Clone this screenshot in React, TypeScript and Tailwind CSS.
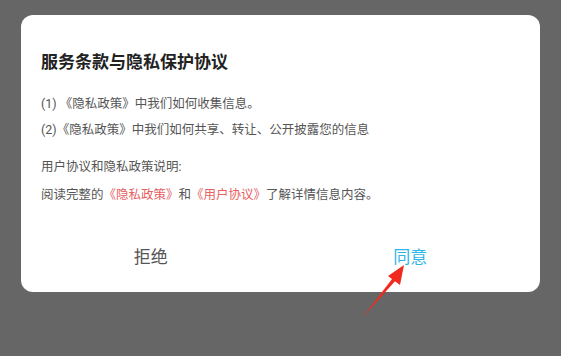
const App = () => {
  return (
    <div
      className="relative h-[356px] w-[561px] overflow-hidden bg-[#666666] pt-[15px]"
      style={{ fontFamily: 'Roboto, "Noto Sans CJK SC", sans-serif' }}
    >
      <div className="mx-[21px] h-[277px] rounded-[12px] bg-white">
        <div className="pl-[20px] pr-[20px] pt-[35px]">
          <h1 className="text-[17px] font-bold leading-[24px] text-[#222222]">
            服务条款与隐私保护协议
          </h1>
          <div className="mt-[17px] text-[12.5px] leading-[26px] text-[#555555]">
            <p>(1) 《隐私政策》中我们如何收集信息。</p>
            <p>(2)《隐私政策》中我们如何共享、转让、公开披露您的信息</p>
          </div>
          <div className="mt-[10px] text-[12.5px] leading-[28px] text-[#555555]">
            <p>用户协议和隐私政策说明:</p>
            <p>
              阅读完整的<span className="text-[#e8605f]">《隐私政策》</span>和
              <span className="text-[#e8605f]">《用户协议》</span>了解详情信息内容。
            </p>
          </div>
        </div>
        <div className="mt-[36px] flex">
          <button className="flex-1 text-[17px] leading-[24px] text-[#555555]">拒绝</button>
          <button className="flex-1 text-[17px] leading-[24px] text-[#2fb5e8]">同意</button>
        </div>
      </div>

      <svg className="absolute left-0 top-0" width="561" height="356" viewBox="0 0 561 356">
        <polygon points="362,318 394,276.5 397,279" fill="#f02a1e" />
        <polygon points="404,265 388,276 400,285" fill="#f02a1e" />
      </svg>
    </div>
  );
};

export default App;
